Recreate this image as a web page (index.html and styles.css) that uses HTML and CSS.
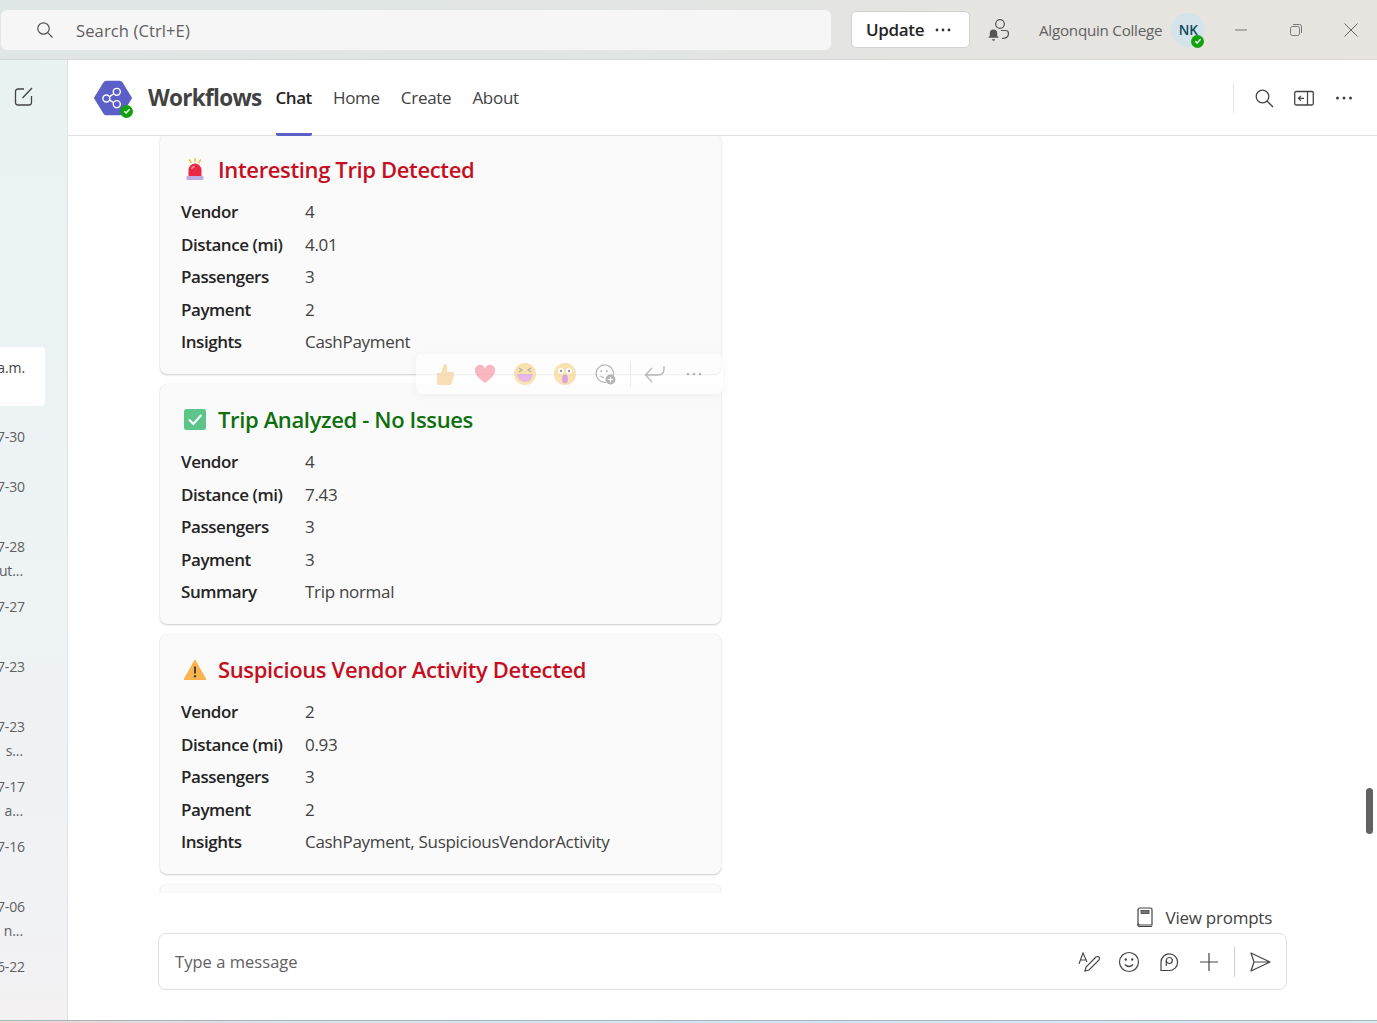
FILE: index.html
```html
<!DOCTYPE html>
<html lang="en">
<head>
<meta charset="utf-8">
<title>Workflows</title>
<link rel="stylesheet" href="styles.css">
</head>
<body>
<div class="app">
  <header class="topbar">
    <div class="searchbox">
      <svg class="search-ico" width="20" height="20" viewBox="0 0 20 20"><circle cx="8.5" cy="8.5" r="5.7" fill="none" stroke="#555" stroke-width="1.2"/><path d="M12.7 12.7l4.8 4.8" stroke="#555" stroke-width="1.2" fill="none"/></svg>
      <span class="search-text">Search (Ctrl+E)</span>
    </div>
    <button class="update"><span>Update</span><svg width="16" height="4" viewBox="0 0 16 4"><circle cx="2" cy="2" r="1.4" fill="#333"/><circle cx="8" cy="2" r="1.4" fill="#333"/><circle cx="14" cy="2" r="1.4" fill="#333"/></svg></button>
    <svg class="person" width="22" height="24" viewBox="0 0 22 24"><circle cx="12" cy="6" r="4.3" fill="none" stroke="#555" stroke-width="1.2"/><path d="M13 12.5h4.500a3 3 0 0 1 3 3c0 3.500-3 5-6.500 5" fill="none" stroke="#555" stroke-width="1.2"/><path d="M5.500 11.500a3.700 3.700 0 0 1 3.700 3.700v2.600l1.500 2H.3l1.500-2v-2.600a3.700 3.700 0 0 1 3.700-3.700zM4 21.200h3a1.500 1.500 0 0 1-3 0z" fill="#555"/></svg>
    <span class="org">Algonquin College</span>
    <div class="avatar">NK
      <span class="badge"><svg width="8" height="8" viewBox="0 0 8 8"><path d="M1.300 4.200l1.800 1.700 3.500-3.700" fill="none" stroke="#fff" stroke-width="1.400"/></svg></span>
    </div>
    <div class="winctl">
      <svg width="14" height="14" viewBox="0 0 14 14"><path d="M1 7h12" stroke="#777" stroke-width="1"/></svg>
      <svg width="14" height="14" viewBox="0 0 14 14"><rect x="1.500" y="3.500" width="9" height="9" rx="2" fill="none" stroke="#777"/><path d="M4 1.500h6.500a2 2 0 0 1 2 2V10" fill="none" stroke="#777"/></svg>
      <svg width="14" height="14" viewBox="0 0 14 14"><path d="M.5.500l13 13M13.500.500l-13 13" stroke="#666" stroke-width="1"/></svg>
    </div>
  </header>
  <div class="workspace">
    <aside class="rail">
      <svg class="compose" width="22" height="22" viewBox="0 0 22 22"><path d="M11 4H5a2.500 2.500 0 0 0-2.500 2.500v11A2.500 2.500 0 0 0 5 20h11a2.500 2.500 0 0 0 2.500-2.500V11" fill="none" stroke="#444" stroke-width="1.300"/><path d="M9.500 13l9.500-10" fill="none" stroke="#444" stroke-width="1.300"/></svg>
      <div class="rail-list">
        <div class="rail-card"><span class="rail-line">a.m.</span></div>
        <div class="rail-item short"><span class="rail-line">7-30</span></div>
        <div class="rail-item"><span class="rail-line">7-30</span></div>
        <div class="rail-item"><span class="rail-line">7-28</span><span class="rail-line sub">ut...</span></div>
        <div class="rail-item"><span class="rail-line">7-27</span></div>
        <div class="rail-item"><span class="rail-line">7-23</span></div>
        <div class="rail-item"><span class="rail-line">7-23</span><span class="rail-line sub">s...</span></div>
        <div class="rail-item"><span class="rail-line">7-17</span><span class="rail-line sub">a...</span></div>
        <div class="rail-item"><span class="rail-line">7-16</span></div>
        <div class="rail-item"><span class="rail-line">7-06</span><span class="rail-line sub">n...</span></div>
        <div class="rail-item"><span class="rail-line">6-22</span></div>
      </div>
    </aside>
    <main class="main">
      <div class="apphead">
        <div class="applogo">
          <svg width="40" height="36" viewBox="0 0 42 38"><path d="M.8 19L11 2.500Q12 .8 14 .8h14q2 0 3 1.700L41.200 19 31 35.500q-1 1.700-3 1.700H14q-2 0-3-1.700z" fill="#5b5fc7"/><g fill="none" stroke="#fff" stroke-width="1.500"><circle cx="14" cy="19.500" r="3.700"/><circle cx="25" cy="12.500" r="3.700"/><circle cx="25" cy="25.500" r="3.700"/><path d="M17.300 17.500l4.500-3M17.300 21.300l4.500 2.500"/></g></svg>
          <span class="badge logo-badge"><svg width="8" height="8" viewBox="0 0 8 8"><path d="M1.300 4.200l1.800 1.700 3.500-3.700" fill="none" stroke="#fff" stroke-width="1.400"/></svg></span>
        </div>
        <span class="apptitle">Workflows</span>
        <nav class="tabs">
          <a class="tab active">Chat</a>
          <a class="tab">Home</a>
          <a class="tab">Create</a>
          <a class="tab">About</a>
        </nav>
        <div class="headtools">
          <svg width="22" height="22" viewBox="0 0 22 22"><circle cx="9.500" cy="9.500" r="6.300" fill="none" stroke="#444" stroke-width="1.300"/><path d="M14 14l6 6" stroke="#444" stroke-width="1.300"/></svg>
          <svg width="22" height="18" viewBox="0 0 22 18"><rect x="1.700" y="2.500" width="18.600" height="13.500" rx="1.500" fill="none" stroke="#444" stroke-width="1.300"/><path d="M14.500 2.500V16M11 9.300H5.500M8 6.800L5.500 9.300 8 11.800" fill="none" stroke="#444" stroke-width="1.200"/></svg>
          <svg width="22" height="4" viewBox="-2 0 22 4"><circle cx="2.500" cy="2" r="1.500" fill="#444"/><circle cx="9" cy="2" r="1.500" fill="#444"/><circle cx="15.500" cy="2" r="1.500" fill="#444"/></svg>
        </div>
      </div>
      <div class="chat">
        <article class="card first">
          <h2 class="card-title alert"><svg class="emoji" width="22" height="24" viewBox="0 0 22 24"><path d="M11 1.500v3M5.500 3l1.500 2.500M16.500 3L15 5.500" stroke="#f5c33b" stroke-width="1.500" stroke-linecap="round"/><path d="M4.500 19.500V13a6.500 6.500 0 0 1 13 0v6.500z" fill="#ea2a45"/><path d="M7.500 12a3.500 3.500 0 0 1 3-2.500" stroke="#ff9aa5" stroke-width="1.500" fill="none"/><rect x="2.500" y="19" width="17" height="4" rx="1" fill="#bcaee2"/></svg>Interesting Trip Detected</h2>
          <dl class="facts">
            <dt>Vendor</dt><dd>4</dd>
            <dt>Distance (mi)</dt><dd>4.01</dd>
            <dt>Passengers</dt><dd>3</dd>
            <dt>Payment</dt><dd>2</dd>
            <dt>Insights</dt><dd>CashPayment</dd>
          </dl>
        </article>
        <article class="card">
          <h2 class="card-title ok"><svg class="emoji" width="22" height="24" viewBox="0 0 22 24"><rect x="0" y="2" width="22" height="21" rx="2.500" fill="#5dc589"/><path d="M5 12.500l4.300 4.500 8-9" fill="none" stroke="#fff" stroke-width="2"/></svg>Trip Analyzed - No Issues</h2>
          <dl class="facts">
            <dt>Vendor</dt><dd>4</dd>
            <dt>Distance (mi)</dt><dd>7.43</dd>
            <dt>Passengers</dt><dd>3</dd>
            <dt>Payment</dt><dd>3</dd>
            <dt>Summary</dt><dd>Trip normal</dd>
          </dl>
        </article>
        <article class="card">
          <h2 class="card-title alert"><svg class="emoji" width="22" height="24" viewBox="0 0 22 24"><path d="M11 3L22 22.500H0z" fill="#fbb44d" stroke="#fbb44d" stroke-linejoin="round"/><path d="M11 9.500v7" stroke="#444" stroke-width="2"/><circle cx="11" cy="19.300" r="1.200" fill="#444"/></svg>Suspicious Vendor Activity Detected</h2>
          <dl class="facts">
            <dt>Vendor</dt><dd>2</dd>
            <dt>Distance (mi)</dt><dd>0.93</dd>
            <dt>Passengers</dt><dd>3</dd>
            <dt>Payment</dt><dd>2</dd>
            <dt>Insights</dt><dd>CashPayment, SuspiciousVendorActivity</dd>
          </dl>
        </article>
        <article class="card"></article>
      </div>
      <div class="reactions">
        <svg width="22" height="24" viewBox="0 0 22 24"><path d="M3 11h4l3-9q3 0 3 3v5h5q2 0 2 2l-2 9q-.5 2-2 2H5q-2 0-2-2z" fill="#f7c98a"/></svg>
        <svg width="22" height="20" viewBox="0 0 24 22"><path d="M12 21C5 16 1 12 1 7a5.500 5.500 0 0 1 11-1.500A5.500 5.500 0 0 1 23 7c0 5-4 9-11 14z" fill="#f7899b"/></svg>
        <svg width="22" height="22" viewBox="0 0 22 22"><circle cx="11" cy="11" r="11" fill="#f9cf7d"/><path d="M3 11h16a8 8 0 0 1-16 0z" fill="#d98bd8"/><path d="M5 5l3 2-3 2M17 5l-3 2 3 2" fill="none" stroke="#777" stroke-width="1.200"/></svg>
        <svg width="22" height="22" viewBox="0 0 22 22"><circle cx="11" cy="11" r="11" fill="#f9cf7d"/><circle cx="7" cy="8" r="3" fill="#fff"/><circle cx="15" cy="8" r="3" fill="#fff"/><circle cx="7" cy="8" r="1.200" fill="#555"/><circle cx="15" cy="8" r="1.200" fill="#555"/><ellipse cx="11" cy="16" rx="3" ry="4.500" fill="#c86bc9"/></svg>
        <svg width="22" height="22" viewBox="0 0 24 24"><path d="M13 21a9.500 9.500 0 1 1 8-7" fill="none" stroke="#777" stroke-width="1.200"/><circle cx="8" cy="9" r="1" fill="#777"/><circle cx="14" cy="9" r="1" fill="#777"/><path d="M7 14q2 2 4 2" fill="none" stroke="#777" stroke-width="1.200"/><circle cx="18" cy="18" r="5.500" fill="#777"/><path d="M18 15v6M15 18h6" stroke="#fff" stroke-width="1.300"/></svg>
        <span class="react-sep"></span>
        <svg width="24" height="20" viewBox="0 0 24 20"><path d="M21 2v3q0 6-6 6H3M9 4l-6.500 7L9 18" fill="none" stroke="#777" stroke-width="1.300"/></svg>
        <svg width="18" height="4" viewBox="0 0 18 4"><circle cx="3" cy="2" r="1.300" fill="#777"/><circle cx="9" cy="2" r="1.300" fill="#777"/><circle cx="15" cy="2" r="1.300" fill="#777"/></svg>
      </div>
      <span class="scrollthumb"></span>
      <div class="prompts">
        <svg width="16" height="21" viewBox="0 0 16 21"><path d="M3 1h10.500a1.500 1.500 0 0 1 1.500 1.500V18H3a2 2 0 0 1-2-2V3a2 2 0 0 1 2-2zM1 16.500a2 2 0 0 0 2 3h12" fill="none" stroke="#444" stroke-width="1.200"/><rect x="4" y="3.500" width="8" height="3" fill="#777" stroke="#444" stroke-width=".8"/></svg>
        <span>View prompts</span>
      </div>
      <div class="composer">
        <span class="placeholder">Type a message</span>
        <div class="composer-tools">
          <svg width="22" height="22" viewBox="0 0 22 22"><path d="M1 13L5 2l4 9M2.500 9h5" fill="none" stroke="#444" stroke-width="1.100"/><path d="M7 20l1-4L18 6q2-1 3 0t0 3L11 19z" fill="none" stroke="#444" stroke-width="1.200"/></svg>
          <svg width="22" height="22" viewBox="0 0 22 22"><circle cx="11" cy="11" r="9.500" fill="none" stroke="#444" stroke-width="1.200"/><circle cx="7.800" cy="8.500" r="1.200" fill="#444"/><circle cx="14.200" cy="8.500" r="1.200" fill="#444"/><path d="M6.800 13.500q4.200 4 8.400 0" fill="none" stroke="#444" stroke-width="1.200"/></svg>
          <svg width="22" height="22" viewBox="-1 -1 22 22"><path d="M2 18.500V10a8.300 8.300 0 1 1 8.300 8.500z" fill="none" stroke="#444" stroke-width="1.200"/><circle cx="10.300" cy="8.500" r="3" fill="none" stroke="#444" stroke-width="1.200"/><path d="M7.300 8.500V14" stroke="#444" stroke-width="1.200"/></svg>
          <svg width="22" height="22" viewBox="-1 -1 22 22"><path d="M10 1v18M1 10h18" stroke="#444" stroke-width="1.200"/></svg>
          <span class="comp-sep"></span>
          <svg width="22" height="22" viewBox="0 0 22 22"><path d="M2 2l19 9-19 9 3-9zM5 11h16" fill="none" stroke="#444" stroke-width="1.200" stroke-linejoin="round"/></svg>
        </div>
      </div>
    </main>
  </div>
  <div class="taskedge"></div>
</div>
</body>
</html>
```

FILE: styles.css
```css
* { box-sizing: border-box; }
html, body { margin: 0; padding: 0; }
body { font-family: "Open Sans", "Noto Sans", sans-serif; color: #242424; background: #fff; }
svg { display: block; flex: none; }
.app { width: 1377px; height: 1023px; display: flex; flex-direction: column; overflow: hidden; }

.topbar { height: 60px; flex: none; display: flex; align-items: center; padding: 0 16px 0 1px; background: linear-gradient(90deg, #dfe7e6 0%, #e1e5e3 45%, #e6e4e0 80%, #e8e5df 100%); border-bottom: 1px solid #d6d6d6; }
.searchbox { width: 830px; height: 40px; background: #f6f6f6; border-radius: 6px; display: flex; align-items: center; padding-left: 34px; box-shadow: 0 0 0 1px #e4e6e6; margin-top: 1px; }
.search-text { font-size: 16.600px; color: #616161; margin-left: 21px; letter-spacing: .08px; }
.update { margin-left: 20px; width: 119px; height: 37px; background: #fff; border: 1px solid #d1d1d1; border-radius: 5px; display: flex; align-items: center; gap: 11px; padding: 0 0 0 14px; font: 600 17px "Open Sans", sans-serif; color: #242424; letter-spacing: -.35px; }
.person { margin-left: 18px; }
.org { margin-left: 29px; font-size: 15.200px; color: #616161; letter-spacing: -.25px; }
.avatar { position: relative; margin-left: 9px; width: 34px; height: 34px; border-radius: 50%; background: #d5e3ea; color: #0f4a5f; font-size: 13.500px; font-weight: 600; display: flex; align-items: center; justify-content: center; }
.badge { position: absolute; width: 13px; height: 13px; border-radius: 50%; background: #13a10e; display: flex; align-items: center; justify-content: center; right: 1px; bottom: -1px; }
.winctl { margin-left: 29px; display: flex; gap: 41px; }

.workspace { flex: 1; display: flex; min-height: 0; }
.rail { width: 68px; flex: none; border-right: 1px solid #dfe3e5; background: linear-gradient(180deg, #e9f2f2 0%, #edf3f5 45%, #f0f2f5 85%, #f3f1f2 100%); padding: 25px 0 0; overflow: hidden; }
.compose { margin-left: 13px; }
.rail-list { margin-top: 240px; width: 45px; display: flex; flex-direction: column; }
.rail-card { height: 59px; background: #fff; border-radius: 0 4px 4px 0; padding: 11px 20px 0 0; margin-bottom: 21px; }
.rail-item { height: 60px; padding-right: 20px; }
.rail-item.short { height: 50px; }
.rail-line { display: flex; justify-content: flex-end; height: 20px; line-height: 20px; font-size: 14px; color: #616161; white-space: nowrap; letter-spacing: -.1px; }
.rail-card .rail-line { color: #424242; }
.rail-line.sub { margin-top: 4px; padding-right: 2px; }

.main { flex: 1; min-width: 0; position: relative; display: flex; flex-direction: column; }
.apphead { height: 76px; flex: none; display: flex; align-items: center; padding-left: 25px; border-bottom: 1px solid #e0e0e0; }
.applogo { position: relative; width: 40px; height: 36px; }
.logo-badge { right: 0; bottom: -2px; }
.apptitle { margin-left: 15px; font-size: 22.500px; font-weight: 700; color: #424242; letter-spacing: -.7px; }
.tabs { display: flex; gap: 21px; margin-left: 14px; align-self: stretch; }
.tab { display: flex; align-items: center; font-size: 17px; color: #424242; height: 76px; border-bottom: 3px solid transparent; margin-bottom: -1px; padding-top: 2px; letter-spacing: -.28px; }
.tab.active { font-weight: 600; color: #242424; border-bottom-color: #5b5fc7; border-radius: 0 0 2px 2px; letter-spacing: -.45px; }
.headtools { margin-left: auto; height: 30px; display: flex; align-items: center; padding-left: 19px; border-left: 1px solid #e6e6e6; gap: 18px; margin-right: 22px; }

.chat { height: 757px; flex: none; padding-left: 92px; overflow: hidden; }
.card { width: 561px; height: 240px; background: #fafafa; border-radius: 7px; box-shadow: 0 1px 2px rgba(0,0,0,.2), 0 0 1px rgba(0,0,0,.1); margin: 0 0 10px; padding: 19px 0 0 21px; }
.card.first { margin-top: -2px; }
.card-title { display: flex; align-items: center; gap: 12px; margin: 0 0 10.500px 3px; height: 32px; font-size: 22px; font-weight: 600; letter-spacing: -.36px; }
.alert { color: #c50f1f; }
.ok { color: #0e700e; }
.facts { display: grid; grid-template-columns: 124px 1fr; grid-auto-rows: 32.500px; align-items: center; margin: 0; font-size: 17px; letter-spacing: -.3px; }
.facts dt { font-weight: 600; color: #242424; letter-spacing: -.45px; }
.facts dd { margin: 0; color: #424242; }

.reactions { position: absolute; left: 348px; top: 294px; width: 307px; height: 40px; border-radius: 6px; background: rgba(255,255,255,.65); box-shadow: 0 2px 10px rgba(0,0,0,.05); display: flex; align-items: center; gap: 18px; padding: 0 0 0 18px; }
.reactions svg { opacity: .6; }
.reactions svg:nth-of-type(5) { opacity: .55; }
.reactions svg:nth-of-type(6), .reactions svg:nth-of-type(7) { opacity: .5; }
.react-sep { width: 1px; height: 26px; background: #eaeaea; margin: 0 -6px 0 -4px; }
.scrollthumb { position: absolute; left: 1298px; top: 728px; width: 7px; height: 46px; border-radius: 4px; background: #616161; }

.prompts { height: 40px; flex: none; display: flex; align-items: center; justify-content: flex-end; gap: 13px; padding: 8px 105px 0 0; font-size: 17px; color: #424242; letter-spacing: -.25px; }
.composer { height: 57px; flex: none; margin: 0 90px; border: 1px solid #e0e0e0; border-radius: 8px; background: #fff; display: flex; align-items: center; padding: 0 15px 0 16px; }
.placeholder { font-size: 16.500px; color: #616161; letter-spacing: .04px; }
.composer-tools { margin-left: auto; margin-top: 1px; display: flex; align-items: center; gap: 18px; }
.comp-sep { width: 1px; height: 30px; background: #d1d1d1; margin: 0 -4px 0 -4px; }

.taskedge { height: 3px; flex: none; background: linear-gradient(90deg, #f3cfc9 0%, #d7e3ee 20%, #cfe6f2 60%, #d9ebf4 100%); border-top: 1px solid #a9b6bf; }
```
